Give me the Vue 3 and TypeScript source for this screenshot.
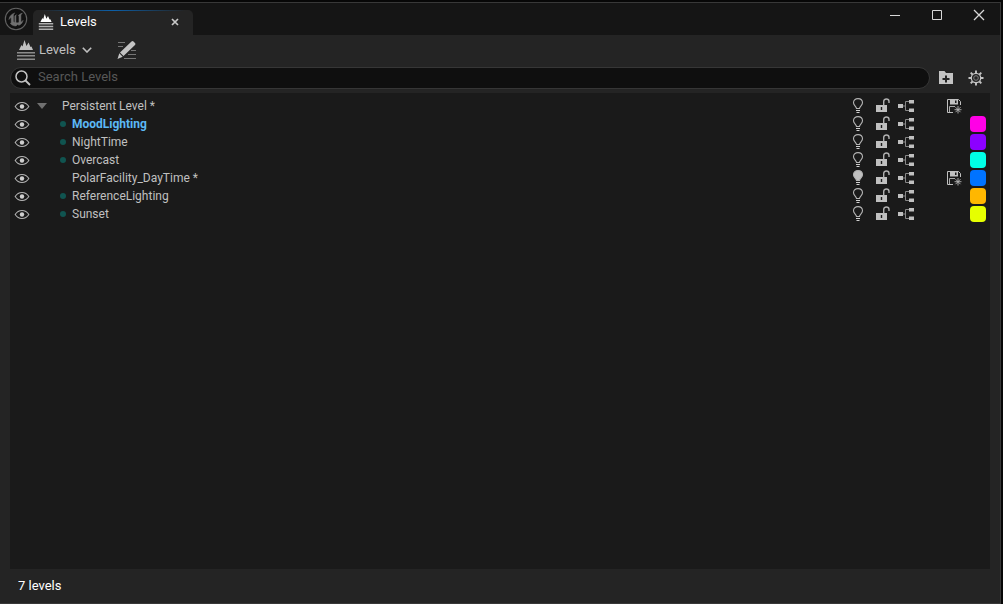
<script setup lang="ts">
import { ref } from 'vue'

interface Level {
  name: string
  persistent?: boolean
  current?: boolean
  streaming?: boolean
  lightingScenario?: boolean
  unsaved?: boolean
  color?: string
}

const search = ref('')

const levels: Level[] = [
  { name: 'Persistent Level', persistent: true, unsaved: true },
  { name: 'MoodLighting', current: true, streaming: true, color: '#ff00e6' },
  { name: 'NightTime', streaming: true, color: '#8c00ff' },
  { name: 'Overcast', streaming: true, color: '#00ffe6' },
  { name: 'PolarFacility_DayTime', lightingScenario: true, unsaved: true, color: '#0073ff' },
  { name: 'ReferenceLighting', streaming: true, color: '#ffb700' },
  { name: 'Sunset', streaming: true, color: '#e6ff00' },
]
</script>

<template>
  <div class="desktop">
    <main class="window">
      <header class="titlebar">
        <svg class="logo" viewBox="0 0 24 24" aria-hidden="true">
          <circle cx="12" cy="12" r="10.7" fill="#101010" stroke="#626262" stroke-width="1.1" />
          <path d="M10.800 6C7.500 7 5.200 9.500 4.900 12.500C5.800 11.300 6.600 10.700 7.200 10.900V15.600C7.200 16.300 6.800 16.500 6.300 16.300C7.600 18.300 9.800 19 12 18.900L13.600 17.500L15 18.300C17.100 17.300 18.600 15.600 19.100 13.400C18.300 14.300 17.400 14.900 16.900 14.700V8.700C16.900 7.800 17.500 6.900 18.300 6.200C16.600 6.600 15.200 7.400 14.300 8.600C14.900 8.700 15 9 15 9.500V15C14.300 16 12.800 16.200 11.900 15.300V8.600L12.500 7.800L11.800 8L10.800 9V15.500L9.400 14.500V8C9.400 7.300 9.900 6.600 10.800 6Z" fill="#707070" stroke="#707070" stroke-width="0.500" />
        </svg>
        <div class="tab">
          <svg class="levels-icon" viewBox="0 0 18 20" aria-hidden="true">
            <path d="M2 10L4.500 5L5.500 6.500L7.500 0L9.500 6L11.500 2.500L13.500 7L14.500 6.500L16 10Z" fill="#fff" />
            <path d="M0 11.300H18V13.200H0ZM0 14.700H18V16.600H0ZM0 18.100H18V20H0Z" fill="#b0b0b0" />
          </svg>
          <h1>Levels</h1>
          <button class="tab-close" aria-label="Close tab">
            <svg viewBox="0 0 8 8"><path d="M1 1L7 7M7 1L1 7" stroke="#c8c8c8" stroke-width="1.700" /></svg>
          </button>
        </div>
        <div class="window-controls">
          <button aria-label="Minimize"><svg viewBox="0 0 12 12"><path d="M1 6.500H11" stroke="#d8d8d8" /></svg></button>
          <button aria-label="Maximize"><svg viewBox="0 0 12 12"><path d="M1.500 1.500H10.500V10.500H1.500Z" fill="none" stroke="#d8d8d8" /></svg></button>
          <button aria-label="Close"><svg viewBox="0 0 12 12"><path d="M1 1L11 11M11 1L1 11" stroke="#d8d8d8" stroke-width="1.300" /></svg></button>
        </div>
      </header>

      <nav class="toolbar">
        <button class="levels-menu">
          <svg class="menu-icon" viewBox="0 0 18 20" aria-hidden="true">
            <path d="M2 10L4.500 5L5.500 6.500L7.500 0L9.500 6L11.500 2.500L13.500 7L14.500 6.500L16 10Z" fill="#c0c0c0" />
            <path d="M0 12H18V13.500H0ZM0 15H18V16.500H0ZM0 18.500H18V20H0Z" fill="#8c8c8c" />
          </svg>
          <span>Levels</span>
          <svg class="chevron" viewBox="0 0 10 6" aria-hidden="true"><path d="M0.800 0.800L5 5L9.200 0.800" fill="none" stroke="#c0c0c0" stroke-width="1.600" /></svg>
        </button>
        <button class="details" aria-label="Level details">
          <svg viewBox="0 0 20 20">
            <path d="M1 2.500H8M1 6.500H6M14 10.500H19M11 14.500H19M7 18.500H19" stroke="#777" />
            <path d="M14.500 1.500Q15.500 0.500 16.500 1.500L18 3Q19 4 18 5L6.500 16L3 12.500ZM2.300 13.300L5.700 16.700L0.500 19Z" fill="#c4c4c4" />
          </svg>
        </button>
      </nav>

      <div class="search-row">
        <label class="search">
          <svg viewBox="0 0 16 16" aria-hidden="true">
            <circle cx="6.500" cy="6.500" r="5.500" fill="none" stroke="#c4c4c4" stroke-width="1.500" />
            <path d="M10.500 10.500L15 15" stroke="#c4c4c4" stroke-width="1.800" />
          </svg>
          <input v-model="search" type="text" placeholder="Search Levels" aria-label="Search Levels" />
        </label>
        <div class="tools">
          <button class="tool" aria-label="Add folder">
            <svg viewBox="0 0 16 16">
              <path fill-rule="evenodd" d="M1 1H6.500L8 3H15V14H1ZM7 5.500V8H4.500V10H7V12.500H9V10H11.500V8H9V5.500Z" fill="#c4c4c4" />
            </svg>
          </button>
          <button class="tool" aria-label="Settings">
            <svg viewBox="0 0 16 16">
              <circle cx="8" cy="8" r="4.700" fill="none" stroke="#c4c4c4" stroke-width="1.300" />
              <circle cx="8" cy="8" r="2.300" fill="none" stroke="#808080" />
              <path d="M8 0.500V3M8 13V15.500M0.500 8H3M13 8H15.500M2.700 2.700L4.500 4.500M11.500 11.500L13.300 13.300M13.300 2.700L11.500 4.500M4.500 11.500L2.700 13.300" stroke="#c4c4c4" stroke-width="1.900" />
            </svg>
          </button>
        </div>
      </div>

      <section class="panel" aria-label="Levels list">
        <table>
          <colgroup>
            <col class="icon-col" />
            <col />
            <col v-for="n in 6" :key="n" class="icon-col" />
          </colgroup>
          <tbody>
            <tr v-for="level in levels" :key="level.name">
              <td>
                <button class="cell-button" aria-label="Toggle visibility">
                  <svg viewBox="0 0 16 16">
                    <path d="M1.200 8.500C4.500 3.200 11.500 3.200 14.800 8.500C11.500 13.800 4.500 13.800 1.200 8.500Z" fill="none" stroke="#b4b4b4" stroke-width="1.100" />
                    <circle cx="8" cy="8.500" r="2.200" fill="#d0d0d0" />
                  </svg>
                </button>
              </td>
              <td>
                <div class="name" :class="{ root: level.persistent, current: level.current }">
                  <button v-if="level.persistent" class="expander" aria-label="Collapse">
                    <svg viewBox="0 0 10 6"><path d="M0 0H10L5 6Z" fill="#707070" /></svg>
                  </button>
                  <i v-else class="dot" :class="{ visible: level.streaming }"></i>
                  <span>{{ level.name }}{{ level.unsaved ? ' *' : '' }}</span>
                </div>
              </td>
              <td>
                <button class="cell-button" aria-label="Lighting scenario">
                  <svg viewBox="0 0 16 16">
                    <path d="M6.500 10.500C6.500 8.500 3.500 7.500 3.500 4.800C3.500 2.300 5.500 0.600 8 0.600S12.500 2.300 12.500 4.800C12.500 7.500 9.500 8.500 9.500 10.500Z" :fill="level.lightingScenario ? '#c0c0c0' : 'none'" stroke="#b4b4b4" stroke-width="1.100" />
                    <path d="M6 12.500H10M6.500 14.500H9.500" stroke="#d0d0d0" stroke-width="1.100" />
                  </svg>
                </button>
              </td>
              <td>
                <button class="cell-button" aria-label="Toggle lock">
                  <svg viewBox="0 0 16 16">
                    <path fill-rule="evenodd" d="M2 7H13V14H2ZM6.800 9V12H8.200V9Z" fill="#c0c0c0" />
                    <path d="M9.700 7.500V3.500C9.700 0.200 15 0.200 15 3.500V5" fill="none" stroke="#b0b0b0" stroke-width="1.400" />
                  </svg>
                </button>
              </td>
              <td>
                <button class="cell-button" aria-label="Open level blueprint">
                  <svg viewBox="0 0 16 16">
                    <path d="M3 8H8M11 3.500H7.500V12.500H11" fill="none" stroke="#888" />
                    <path d="M0 6H5V10H0ZM11 2H16V5.500H11ZM11 10.500H16V14H11Z" fill="#c0c0c0" />
                  </svg>
                </button>
              </td>
              <td></td>
              <td>
                <button v-if="level.unsaved" class="cell-button" aria-label="Save level">
                  <svg viewBox="0 0 16 16">
                    <path d="M7 14.500H1.500V1.500H12.500L14.500 3.500V7" fill="none" stroke="#c0c0c0" />
                    <path fill-rule="evenodd" d="M4 1H12V6.500H4ZM9 2.500V5H10.500V2.500Z" fill="#c0c0c0" />
                    <path d="M3.500 14V8.500H9" fill="none" stroke="#a8a8a8" />
                    <path d="M12 8V15.500M8.500 11.700H15.500M9.500 9.200L14.500 14.200M14.500 9.200L9.500 14.200" stroke="#b4b4b4" stroke-width="0.900" />
                  </svg>
                </button>
              </td>
              <td>
                <button v-if="level.color" class="swatch" aria-label="Level color" :style="{ backgroundColor: level.color }"></button>
              </td>
            </tr>
          </tbody>
        </table>
      </section>

      <footer>{{ levels.length }} levels</footer>
    </main>
  </div>
</template>

<style>
body {
  background: #050505;
}
</style>

<style scoped>
.desktop {
  box-sizing: border-box;
  display: flex;
  min-height: 100vh;
  padding: 2px 2px 0 0;
  background: #070707;
  color: #c0c0c0;
  font-family: Roboto, "Liberation Sans", sans-serif;
  font-size: 13px;
}
.window {
  flex: 1;
  display: flex;
  flex-direction: column;
  min-width: 0;
  border: solid #383838;
  border-width: 1px 1px 1px 0;
  background: #242424;
}
svg {
  display: block;
}
button {
  display: flex;
  align-items: center;
  justify-content: center;
  margin: 0;
  padding: 0;
  border: 0;
  background: none;
  color: inherit;
  font: inherit;
}
.titlebar {
  display: flex;
  align-items: flex-end;
  height: 32px;
  padding-left: 4px;
  background: #151515;
}
.logo {
  width: 24px;
  height: 24px;
  align-self: center;
}
.tab {
  display: flex;
  align-items: center;
  box-sizing: border-box;
  width: 160px;
  height: 25px;
  margin-left: 5px;
  padding: 0 14px 2px 5px;
  border-radius: 5px 5px 0 0;
  background:
    linear-gradient(90deg, transparent 5%, #0c5fa8 50%, transparent 95%) top / 100% 1px no-repeat,
    #242424;
}
.levels-icon {
  width: 16px;
  height: 16px;
}
h1 {
  flex: 1;
  margin: 0 0 0 6px;
  color: #fff;
  font-size: 13px;
  font-weight: 400;
}
.tab-close svg {
  width: 8px;
  height: 8px;
}
.window-controls {
  display: flex;
  align-self: stretch;
  margin-left: auto;
}
.window-controls button {
  width: 42px;
  height: 24px;
}
.window-controls svg {
  width: 12px;
  height: 12px;
}
.toolbar {
  display: flex;
  align-items: center;
  gap: 25px;
  height: 29px;
  padding-left: 17px;
}
.levels-menu {
  gap: 4px;
}
.menu-icon {
  width: 18px;
  height: 20px;
}
.chevron {
  width: 10px;
  height: 6px;
  margin-left: 2px;
}
.details svg {
  width: 20px;
  height: 20px;
}
.search-row {
  display: flex;
  align-items: center;
  gap: 8px;
  margin-top: 3px;
  padding: 0 16px 0 10px;
}
.search {
  flex: 1;
  display: flex;
  align-items: center;
  gap: 7px;
  box-sizing: border-box;
  height: 22px;
  padding: 0 8px 0 4px;
  border: 1px solid #363636;
  border-radius: 11px;
  background: #0f0f0f;
}
.search svg {
  width: 16px;
  height: 16px;
}
.search input {
  flex: 1;
  min-width: 0;
  padding: 0 0 3px;
  border: 0;
  outline: 0;
  background: none;
  color: #c0c0c0;
  font: inherit;
}
.search input::placeholder {
  color: #575757;
  opacity: 1;
}
.tools {
  display: flex;
  gap: 14px;
}
.tool svg {
  width: 16px;
  height: 16px;
}
.panel {
  flex: 1;
  margin: 4px 10px 0;
  padding-top: 4px;
  background: #1a1a1a;
}
table {
  width: 100%;
  table-layout: fixed;
  border-collapse: collapse;
}
.icon-col {
  width: 24px;
}
td {
  height: 18px;
  padding: 0;
  font-size: 12px;
  line-height: 18px;
}
.cell-button {
  width: 24px;
  height: 18px;
}
.cell-button svg {
  width: 16px;
  height: 16px;
}
.name {
  display: flex;
  align-items: center;
  gap: 6px;
  height: 18px;
  padding-left: 26px;
  white-space: nowrap;
}
.name.root {
  gap: 15px;
  padding-left: 3px;
}
.current {
  color: #5cb8f5;
  font-weight: 700;
}
.expander svg {
  width: 10px;
  height: 6px;
}
.dot {
  width: 6px;
  height: 6px;
  border-radius: 50%;
}
.dot.visible {
  background: #105450;
}
.swatch {
  width: 16px;
  height: 16px;
  margin: 0 auto;
  border-radius: 4px;
}
footer {
  height: 34px;
  padding-left: 18px;
  color: #fff;
  line-height: 33px;
}
</style>
